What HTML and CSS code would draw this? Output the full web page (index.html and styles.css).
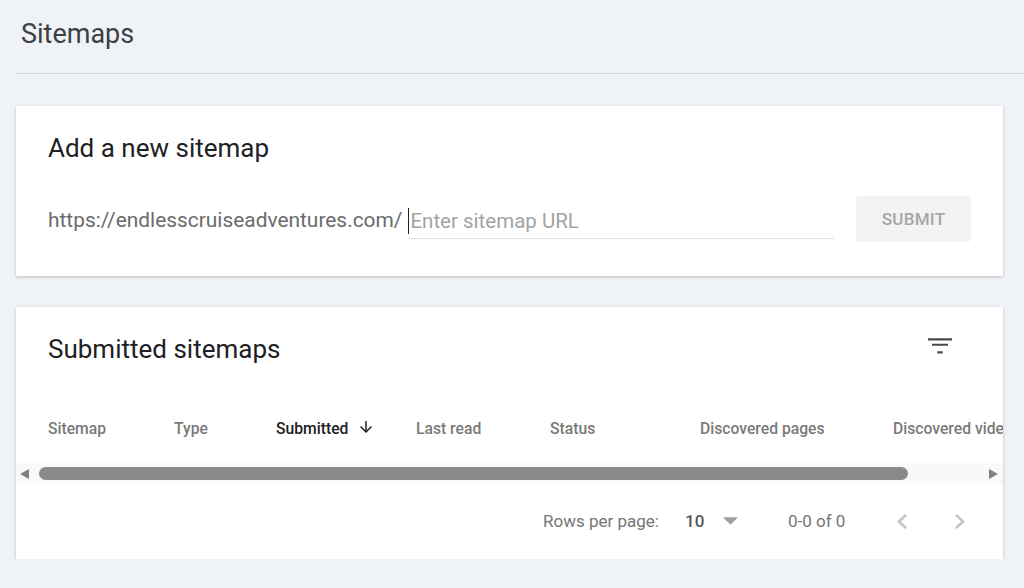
FILE: index.html
```html
<!DOCTYPE html>
<html lang="en">
<head>
  <meta charset="UTF-8" />
  <title>Sitemaps</title>
  <link rel="stylesheet" href="styles.css">
</head>
<body>

  <header class="page-header">
    <h1>Sitemaps</h1>
  </header>

  <main class="content">
    <section class="card add-card">
      <h2>Add a new sitemap</h2>
      <div class="add-row">
        <span class="prefix">https://endlesscruiseadventures.com/</span>
        <div class="url-field">
          <span class="caret"></span>
          <input type="text" placeholder="Enter sitemap URL" />
        </div>
        <button class="submit" disabled>SUBMIT</button>
      </div>
    </section>

    <section class="card list-card">
      <div class="list-title">
        <h2>Submitted sitemaps</h2>
        <svg class="filter-icon" viewBox="0 0 24 24" width="32" height="32">
          <path d="M10 17.6h4v-1.6h-4zM3 6.2v1.6h18V6.2zm3 5.7h12v-1.6H6z" fill="#4a4a4a"/>
        </svg>
      </div>

      <div class="table-scroll">
        <div class="table-head">
          <div class="col col-sitemap">Sitemap</div>
          <div class="col col-type">Type</div>
          <div class="col col-submitted sorted">Submitted
            <svg viewBox="0 0 24 24" width="18" height="18">
              <path d="M20 12l-1.41-1.41L13 16.17V4h-2v12.17l-5.58-5.59L4 12l8 8 8-8z" fill="#202124"/>
            </svg>
          </div>
          <div class="col col-read">Last read</div>
          <div class="col col-status">Status</div>
          <div class="col col-pages">Discovered pages</div>
          <div class="col col-videos">Discovered videos</div>
        </div>
      </div>

      <div class="scrollbar">
        <span class="arrow arrow-left"></span>
        <div class="thumb"></div>
        <span class="arrow arrow-right"></span>
      </div>

      <div class="pager">
        <span class="rows-label">Rows per page:</span>
        <span class="rows-value">10</span>
        <svg class="drop" viewBox="0 0 10 5" width="15" height="8">
          <path d="M0 0l5 5 5-5z" fill="#9e9e9e"/>
        </svg>
        <span class="range">0-0 of 0</span>
        <svg class="chev chev-prev" viewBox="8 6 7.41 12" width="10" height="15" preserveAspectRatio="none">
          <path d="M15.41 7.41L14 6l-6 6 6 6 1.41-1.41L10.83 12z" fill="#c4c4c4"/>
        </svg>
        <svg class="chev chev-next" viewBox="8.59 6 7.41 12" width="10" height="15" preserveAspectRatio="none">
          <path d="M10 6L8.59 7.41 13.17 12l-4.58 4.59L10 18l6-6z" fill="#c4c4c4"/>
        </svg>
      </div>
    </section>
  </main>

</body>
</html>
```

FILE: styles.css
```css
body {
  font-family: Roboto, "Liberation Sans", Arial, sans-serif;
  background: #eff2f6;
  margin: 0;
  color: #202124;
}
h1, h2 {
  margin: 0;
  font-weight: 400;
}
.page-header {
  margin-left: 16px;
  height: 74px;
  border-bottom: 1px solid #d6d9dd;
  padding-left: 5px;
  box-sizing: border-box;
}
.page-header h1 {
  font-size: 27px;
  line-height: 32px;
  padding-top: 18px;
  color: #3c4043;
}
.content {
  padding: 32px 21px 0 16px;
}
.card {
  background: #fff;
  box-shadow: 0 1px 3px rgba(0,0,0,0.22);
}
.card h2 {
  font-size: 26px;
  line-height: 32px;
  color: #202124;
}
.add-card {
  height: 170px;
  box-sizing: border-box;
  padding: 26px 32px 0 32px;
}
.add-row {
  display: flex;
  align-items: center;
  margin-top: 32px;
  height: 46px;
}
.prefix {
  font-size: 20.9px;
  color: #6b6b6b;
  white-space: nowrap;
  margin-right: 6px;
  margin-top: 2px;
}
.url-field {
  flex: 1;
  position: relative;
  border-bottom: 1px solid #e2e2e2;
  height: 35px;
  margin-top: 4px;
  margin-right: 22px;
}
.url-field input {
  border: none;
  outline: none;
  width: 100%;
  height: 100%;
  padding: 0 0 0 2px;
  font-family: inherit;
  font-size: 20.5px;
  background: transparent;
}
.url-field input::placeholder {
  color: #a3a3a3;
}
.caret {
  position: absolute;
  left: 0;
  top: 5px;
  width: 1px;
  height: 26px;
  background: #202124;
}
.submit {
  width: 115px;
  height: 46px;
  border: none;
  border-radius: 4px;
  background: #f3f3f3;
  color: #a6a6a6;
  font-family: inherit;
  font-size: 17px;
  font-weight: 500;
  letter-spacing: 0.3px;
}
.list-card {
  margin-top: 31px;
  height: 252px;
  box-sizing: border-box;
  padding-top: 26px;
}
.list-title {
  display: flex;
  align-items: center;
  justify-content: space-between;
  padding: 0 47px 0 32px;
  height: 32px;
}
.filter-icon {
  margin-top: -6px;
}
.table-scroll {
  overflow: hidden;
  margin-top: 43px;
}
.table-head {
  display: flex;
  height: 40px;
  align-items: center;
  padding-left: 32px;
  white-space: nowrap;
}
.col {
  flex: none;
  font-size: 15.7px;
  font-weight: 500;
  color: #7a7a7a;
  display: flex;
  align-items: center;
}
.col svg {
  margin-left: 9px;
  margin-top: -3px;
}
.col-sitemap { width: 126px; }
.col-type { width: 102px; }
.col-submitted { width: 140px; }
.col-read { width: 134px; }
.col-status { width: 150px; }
.col-pages { width: 193px; }
.col-videos { width: 200px; }
.sorted {
  color: #202124;
}
.scrollbar {
  margin-top: 15px;
  height: 21px;
  background: #f9f9f9;
  display: flex;
  align-items: center;
  padding: 0 5px 0 4px;
}
.arrow {
  width: 0;
  height: 0;
  border-top: 5px solid transparent;
  border-bottom: 5px solid transparent;
}
.arrow-left {
  border-right: 9px solid #808080;
}
.arrow-right {
  border-left: 9px solid #808080;
  margin-left: auto;
}
.thumb {
  margin-left: 10px;
  width: 869px;
  height: 13px;
  border-radius: 7px;
  background: #8a8a8a;
}
.pager {
  display: flex;
  align-items: center;
  height: 74px;
  padding-left: 527px;
  font-size: 17px;
  color: #757575;
}
.rows-label {
  width: 142px;
}
.rows-value {
  width: 38px;
  font-weight: 500;
  color: #555;
}
.drop {
  margin-right: 50px;
}
.range {
  width: 109px;
}
.chev-prev {
  margin-right: 48px;
}
```
